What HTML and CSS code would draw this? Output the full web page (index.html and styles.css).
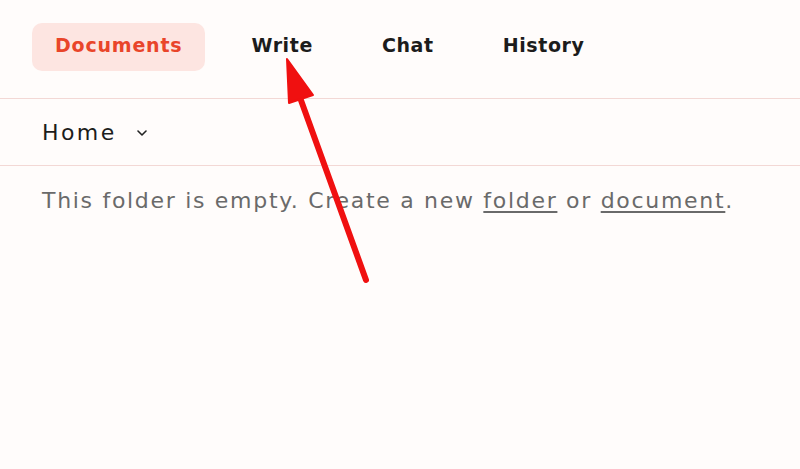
FILE: index.html
```html
<!DOCTYPE html>
<html>
    <head>
        <title>Documents</title>
        <link rel="stylesheet" href="styles.css">
    </head>
    <body>
        <nav class="tabs">
            <a class="tab active">Documents</a>
            <a class="tab">Write</a>
            <a class="tab">Chat</a>
            <a class="tab">History</a>
        </nav>
        <div class="crumbs">
            <span class="folder">Home</span>
            <svg class="chevron" width="10" height="6" viewBox="0 0 10 6">
                <path d="M1 1 L5 5 L9 1" fill="none" stroke="#222" stroke-width="1.6" stroke-linecap="round" stroke-linejoin="round"/>
            </svg>
        </div>
        <p class="empty">
            This folder is empty. Create a new <a>folder</a> or <a>document</a>.
        </p>
        <svg class="arrow" width="800" height="469" viewBox="0 0 800 469">
            <line x1="366" y1="280" x2="298" y2="92" stroke="#f01010" stroke-width="6" stroke-linecap="round"/>
            <polygon points="287,59 313,95 289,103" fill="#f01010" stroke="#f01010" stroke-width="2" stroke-linejoin="round"/>
        </svg>
    </body>
</html>
```

FILE: styles.css
```css
body {
    margin: 0;
    background: #fffcfb;
    font-family: "DejaVu Sans", sans-serif;
    color: #1c1c1c;
}
.tabs {
    display: flex;
    gap: 23px;
    padding: 23px 32px 27px;
    border-bottom: 1px solid #f3d8d5;
}
.tab {
    padding: 0 23px;
    height: 48px;
    line-height: 45px;
    border-radius: 10px;
    font-size: 19px;
    font-weight: bold;
    letter-spacing: 0.6px;
    cursor: pointer;
}
.tab.active {
    background: #fde5e1;
    color: #e9452a;
    letter-spacing: 0.8px;
}
.crumbs {
    display: flex;
    align-items: center;
    gap: 20px;
    height: 66px;
    padding: 0 42px;
    border-bottom: 1px solid #f3d8d5;
}
.folder {
    font-size: 22px;
    letter-spacing: 2.4px;
}
.chevron {
    margin-top: 2px;
}
.empty {
    margin: 22px 42px;
    font-size: 22px;
    letter-spacing: 1.7px;
    color: #6a6a6a;
}
.empty a {
    text-decoration: underline;
    text-underline-offset: 3px;
}
.arrow {
    position: absolute;
    left: 0;
    top: 0;
    pointer-events: none;
}
```
